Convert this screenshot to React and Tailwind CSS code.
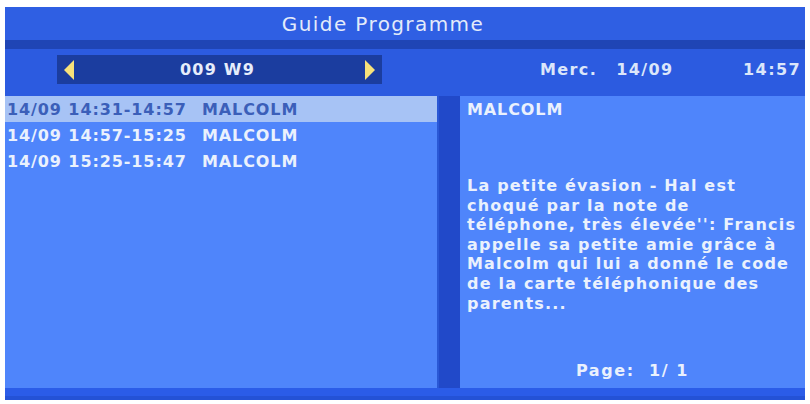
export default function App() {
  const font = { fontFamily: '"DejaVu Sans", "Liberation Sans", sans-serif' };
  const rows = [
    { t: "14/09 14:31-14:57", n: "MALCOLM", sel: true },
    { t: "14/09 14:57-15:25", n: "MALCOLM" },
    { t: "14/09 15:25-15:47", n: "MALCOLM" },
  ];
  return (
    <div className="w-[810px] h-[404px] bg-white pt-[7px] pl-[5px] pr-[5px] overflow-hidden" style={font}>
      <div className="flex flex-col w-[800px] h-[393px]">
        <div className="h-[33px] bg-[#2f5fe3] flex items-center justify-center text-[#e3ebfa] text-[20px] tracking-[1.4px] pr-[44px]">
          Guide Programme
        </div>
        <div className="h-[9px] bg-[#1f45b5]" />
        <div className="h-[47px] bg-[#2c5be0] flex items-start pt-[6px]">
          <div className="ml-[52px] w-[325px] h-[29px] bg-[#1b3d9f] flex items-center justify-between px-[6px]">
            <svg width="12" height="22" viewBox="0 0 12 22"><polygon points="11,1 1,11 11,21" fill="#f7e27a" /></svg>
            <span className="text-[#e6edfb] text-[16px] font-bold tracking-[1.2px] mr-[4px]">009 W9</span>
            <svg width="12" height="22" viewBox="0 0 12 22"><polygon points="1,1 11,11 1,21" fill="#f7e27a" /></svg>
          </div>
          <div className="flex-1 flex items-center h-[29px] text-[#dbe6fa] text-[16px] font-bold tracking-[1.4px]">
            <span className="ml-[158px]">Merc.</span>
            <span className="ml-[19px]">14/09</span>
            <span className="ml-auto mr-[4px]">14:57</span>
          </div>
        </div>
        <div className="flex h-[292px]">
          <div className="w-[432px] bg-[#4f85fb] text-[16px] font-bold tracking-[0.9px] flex flex-col">
            {rows.map((r, i) => (
              <div
                key={i}
                className={
                  "h-[26px] flex items-center pl-[2px] pt-[1px] " +
                  (r.sel ? "bg-[#a7c3f5] text-[#3b5fb9]" : "text-[#eaf1fd]")
                }
              >
                <span className="w-[195px] whitespace-nowrap">{r.t}</span>
                <span>{r.n}</span>
              </div>
            ))}
          </div>
          <div className="w-[23px] bg-[#2149c9] flex">
            <div className="w-[2px] bg-[#2a58d6]" />
          </div>
          <div className="flex-1 bg-[#4f85fb] text-[#eaf1fd] text-[16px] font-bold tracking-[1.2px] flex flex-col pl-[7px] pr-[3px]">
            <div className="mt-[4px] leading-[20px] tracking-[0.9px]">MALCOLM</div>
            <div className="mt-[56px] leading-[19.6px]">
              La petite évasion - Hal est choqué par la note de téléphone, très élevée'': Francis appelle sa petite amie grâce à Malcolm qui lui a donné le code de la carte téléphonique des parents...
            </div>
            <div className="mt-auto mb-[5px] text-center pr-[4px] tracking-[1.6px]">Page:&nbsp; 1/ 1</div>
          </div>
        </div>
        <div className="h-[12px] bg-[#2b5ce8] flex flex-col">
          <div className="flex-1" />
          <div className="h-[4px] bg-[#2452d6]" />
        </div>
      </div>
    </div>
  );
}
